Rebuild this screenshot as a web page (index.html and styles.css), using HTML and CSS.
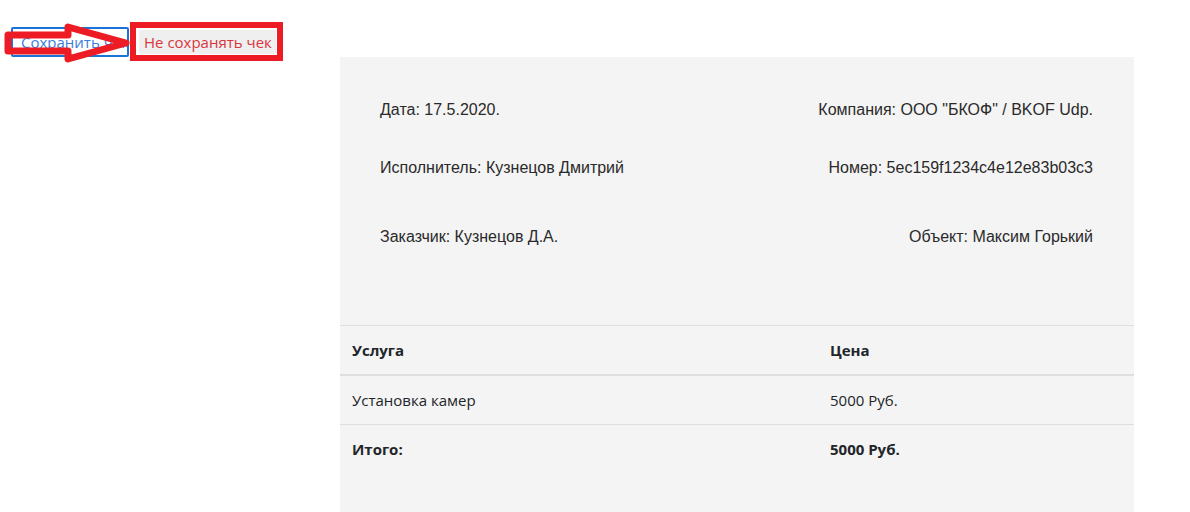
FILE: index.html
```html
<!DOCTYPE html>
<html lang="ru">
<head>
<meta charset="utf-8">
<title>Чек</title>
<link rel="stylesheet" href="styles.css">
</head>
<body>
<div class="toolbar">
  <button class="btn btn-save">Сохранить чек</button>
  <button class="btn btn-cancel">Не сохранять чек</button>
  <div class="mark-box"></div>
  <svg class="mark-arrow" width="140" height="44" viewBox="0 0 140 44">
    <path d="M8,13 L68,13 L68,5 L126,21 L68,37 L68,29 L8,29 Z" fill="none" stroke="#ed1c24" stroke-width="7" stroke-linejoin="round"/>
  </svg>
</div>
<div class="receipt">
  <div class="info">
    <div class="info-row r1"><span>Дата: 17.5.2020.</span><span>Компания: ООО "БКОФ" / BKOF Udp.</span></div>
    <div class="info-row r2"><span>Исполнитель: Кузнецов Дмитрий</span><span>Номер: 5ec159f1234c4e12e83b03c3</span></div>
    <div class="info-row r3"><span>Заказчик: Кузнецов Д.А.</span><span>Объект: Максим Горький</span></div>
  </div>
  <table class="items">
    <thead>
      <tr><th class="c1">Услуга</th><th>Цена</th></tr>
    </thead>
    <tbody>
      <tr><td>Установка камер</td><td>5000 Руб.</td></tr>
      <tr class="total"><td>Итого:</td><td>5000 Руб.</td></tr>
    </tbody>
  </table>
</div>
</body>
</html>
```
FILE: styles.css
```css
html, body {
  margin: 0;
  padding: 0;
  background: #fff;
}
body {
  font-family: "Open Sans", "Liberation Sans", sans-serif;
  color: #212529;
}
.toolbar {
  position: relative;
  display: flex;
  align-items: center;
  gap: 10px;
  padding: 27px 0 0 11px;
  height: 30px;
}
.btn {
  font-family: "Open Sans", "Liberation Sans", sans-serif;
  font-size: 15px;
  height: 30px;
  padding: 0 8px;
  border-radius: 2px;
  white-space: nowrap;
  overflow: hidden;
  cursor: pointer;
}
.btn-save {
  width: 118px;
  text-align: left;
  background: #fff;
  color: #3b7ddd;
  border: 2px solid #1a73d9;
}
.btn-cancel {
  height: 24px;
  width: 137px;
  padding: 0 4px;
  background: #efefef;
  color: #d9363e;
  border: 1px solid #efefef;
  text-align: center;
}
.mark-box {
  position: absolute;
  left: 130px;
  top: 22px;
  width: 141px;
  height: 27px;
  border: 6px solid #ed1c24;
  pointer-events: none;
}
.mark-arrow {
  position: absolute;
  left: 0;
  top: 22px;
}
.receipt {
  margin-left: 340px;
  width: 794px;
  background: #f4f4f4;
  padding-bottom: 60px;
}
.info {
  padding: 43px 41px 78px 40px;
  font-family: "Liberation Sans", Arial, sans-serif;
  font-size: 16px;
  color: #2a2a2a;
}
.info-row {
  display: flex;
  justify-content: space-between;
  line-height: 20px;
}
.r2 { margin-top: 38px; }
.r3 { margin-top: 49px; }
.items {
  width: 100%;
  border-collapse: collapse;
  font-size: 15px;
  line-height: 24px;
}
.items th, .items td {
  text-align: left;
  padding: 12px 12px;
  border-top: 1px solid #dedede;
}
.items th { font-weight: 700; }
.items thead th { border-bottom: 2px solid #dedede; }
.items .c1 { width: 454px; }
.items .total td { font-weight: 700; }
```
